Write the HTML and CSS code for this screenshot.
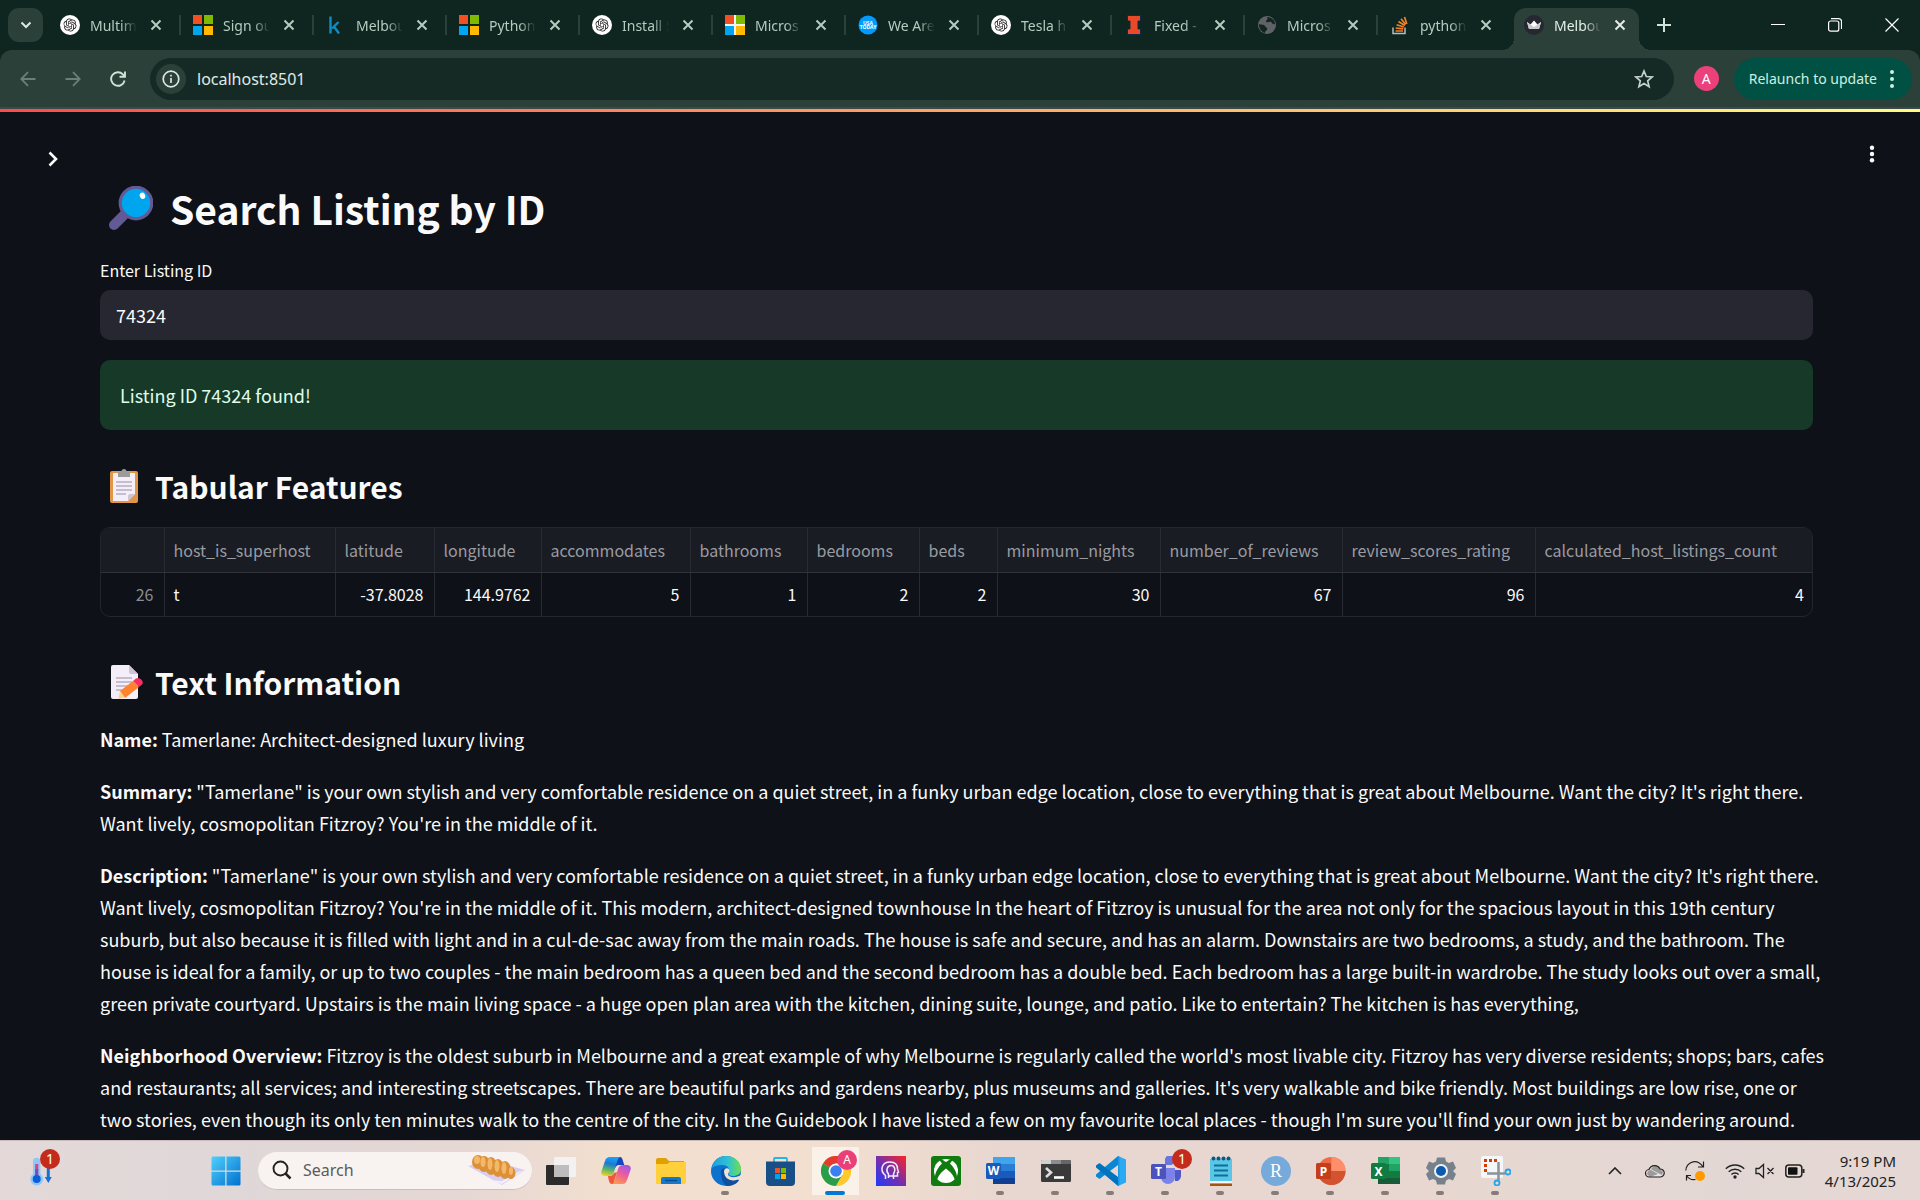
FILE: index.html
```html
<!DOCTYPE html>
<html lang="en">
<head>
<meta charset="utf-8">
<title>Melbourne Listings</title>
<link rel="stylesheet" href="styles.css">
</head>
<body>
<svg class="defs" aria-hidden="true">
  <symbol id="i-x" viewBox="0 0 12 12"><path d="M1.500 1.500l9 9M10.500 1.500l-9 9" stroke="currentColor" stroke-width="2" fill="none"/></symbol>
  <symbol id="i-ai" viewBox="0 0 40 40"><circle cx="20" cy="20" r="20" fill="#fff"/><path transform="translate(6.8 6.8) scale(1.1)" fill="#222" d="M22.2819 9.8211a5.9847 5.9847 0 0 0-.5157-4.9108 6.0462 6.0462 0 0 0-6.5098-2.9A6.0651 6.0651 0 0 0 4.9807 4.1818a5.9847 5.9847 0 0 0-3.9977 2.9 6.0462 6.0462 0 0 0 .7427 7.0966 5.98 5.98 0 0 0 .511 4.9107 6.051 6.051 0 0 0 6.5146 2.9001A5.9847 5.9847 0 0 0 13.2599 24a6.0557 6.0557 0 0 0 5.7718-4.2058 5.9894 5.9894 0 0 0 3.9977-2.9001 6.0557 6.0557 0 0 0-.7475-7.0729zm-9.022 12.6081a4.4755 4.4755 0 0 1-2.8764-1.0408l.1419-.0804 4.7783-2.7582a.7948.7948 0 0 0 .3927-.6813v-6.7369l2.02 1.1686a.071.071 0 0 1 .038.052v5.5826a4.504 4.504 0 0 1-4.4945 4.4944zm-9.6607-4.1254a4.4708 4.4708 0 0 1-.5346-3.0137l.142.0852 4.783 2.7582a.7712.7712 0 0 0 .7806 0l5.8428-3.3685v2.3324a.0804.0804 0 0 1-.0332.0615L9.74 19.9502a4.4992 4.4992 0 0 1-6.1408-1.6464zM2.3408 7.8956a4.485 4.485 0 0 1 2.3655-1.9728V11.6a.7664.7664 0 0 0 .3879.6765l5.8144 3.3543-2.0201 1.1685a.0757.0757 0 0 1-.071 0l-4.8303-2.7865A4.504 4.504 0 0 1 2.3408 7.872zm16.5963 3.8558L13.1038 8.364 15.1192 7.2a.0757.0757 0 0 1 .071 0l4.8303 2.7913a4.4944 4.4944 0 0 1-.6765 8.1042v-5.6772a.79.79 0 0 0-.407-.667zm2.0107-3.0231l-.142-.0852-4.7735-2.7818a.7759.7759 0 0 0-.7854 0L9.409 9.2297V6.8974a.0662.0662 0 0 1 .0284-.0615l4.8303-2.7866a4.4992 4.4992 0 0 1 6.6802 4.66zM8.3065 12.863l-2.02-1.1638a.0804.0804 0 0 1-.038-.0567V6.0742a4.4992 4.4992 0 0 1 7.3757-3.4537l-.142.0805L8.704 5.459a.7948.7948 0 0 0-.3927.6813zm1.0976-2.3654l2.602-1.4998 2.6069 1.4998v2.9994l-2.5974 1.4997-2.6067-1.4997Z"/></symbol>
  <symbol id="i-ms" viewBox="0 0 20 20"><path fill="#f25022" d="M0 0h9v9H0z"/><path fill="#7fba00" d="M11 0h9v9h-9z"/><path fill="#00a4ef" d="M0 11h9v9H0z"/><path fill="#ffb900" d="M11 11h9v9h-9z"/></symbol>
</svg>

<header class="browser">
  <div class="tabstrip">
    <button class="tab-search" aria-label="Search tabs"><svg width="12" height="8" viewBox="0 0 12 8"><path d="M1.500 1.500L6 6l4.500-4.500" fill="none" stroke="#dbe9e2" stroke-width="2"/></svg></button>
    <nav class="tabs">
      <div class="tab"><svg class="fav"><use href="#i-ai"/></svg><a href="#">Multim</a><button aria-label="Close"><svg><use href="#i-x"/></svg></button></div>
      <div class="tab"><svg class="fav"><use href="#i-ms"/></svg><a href="#">Sign ou</a><button aria-label="Close"><svg><use href="#i-x"/></svg></button></div>
      <div class="tab"><svg class="fav" viewBox="0 0 20 20"><path d="M4.500 1.500v17M12.500 7L6 13.500M8 11.500l5 7" fill="none" stroke="#0d8dc4" stroke-width="2.400"/></svg><a href="#">Melbou</a><button aria-label="Close"><svg><use href="#i-x"/></svg></button></div>
      <div class="tab"><svg class="fav"><use href="#i-ms"/></svg><a href="#">Python</a><button aria-label="Close"><svg><use href="#i-x"/></svg></button></div>
      <div class="tab"><svg class="fav"><use href="#i-ai"/></svg><a href="#">Install S</a><button aria-label="Close"><svg><use href="#i-x"/></svg></button></div>
      <div class="tab"><svg class="fav"><rect width="20" height="20" fill="#f3f3f3"/><use href="#i-ms"/></svg><a href="#">Micros</a><button aria-label="Close"><svg><use href="#i-x"/></svg></button></div>
      <div class="tab"><svg class="fav" viewBox="0 0 20 20"><circle cx="10" cy="10" r="9.500" fill="#009bff"/><text x="10" y="9.500" class="usa">USA</text><text x="10" y="14" class="usa">TODAY</text></svg><a href="#">We Are</a><button aria-label="Close"><svg><use href="#i-x"/></svg></button></div>
      <div class="tab"><svg class="fav"><use href="#i-ai"/></svg><a href="#">Tesla h</a><button aria-label="Close"><svg><use href="#i-x"/></svg></button></div>
      <div class="tab"><svg class="fav" viewBox="0 0 20 20"><path d="M3.500.5h13V6H14v8h2.500v5.500h-13V14H6V6H3.500z" fill="#e84a27" stroke="#13294b" stroke-width="1"/></svg><a href="#">Fixed -</a><button aria-label="Close"><svg><use href="#i-x"/></svg></button></div>
      <div class="tab"><svg class="fav" viewBox="0 0 20 20"><circle cx="10" cy="10" r="9" fill="#5f6368"/><path d="M2 9c2 1 5 0 6 2s3 1 2 4c-1 1-2 1-2 3-4-1-6-5-6-9zM10 2c2 2-1 3-1 5 2 1 3-1 5 0s1 3 4 2c0-4-4-7-8-7z" fill="#12261f"/></svg><a href="#">Micros</a><button aria-label="Close"><svg><use href="#i-x"/></svg></button></div>
      <div class="tab"><svg class="fav" viewBox="0 0 20 20"><path d="M3 12.500v6h12v-6" fill="none" stroke="#bcbbbb" stroke-width="1.500"/><path d="M5.500 16h7.500M5.700 13l7.500.8M6.600 9.800l7.200 2.200M8.500 6.500l6.300 4M11 3.800l4.700 5.700M14.500 2l2.300 7" stroke="#f48024" stroke-width="1.700"/></svg><a href="#">python</a><button aria-label="Close"><svg><use href="#i-x"/></svg></button></div>
      <div class="tab active"><svg class="fav" viewBox="0 0 20 20"><circle cx="10" cy="10" r="10" fill="#262730"/><path d="M3 7l3.500 2.500L10 5.500l3.500 4L17 7l-2 7H5z" fill="#fff"/><path d="M3 7l7 5 7-5-2 7H5z" fill="#c9c9cc"/></svg><a href="#">Melbou</a><button aria-label="Close"><svg><use href="#i-x"/></svg></button></div>
    </nav>
    <button class="new-tab" aria-label="New tab"><svg width="14" height="14" viewBox="0 0 14 14"><path d="M7 0v14M0 7h14" stroke="#cfe3d9" stroke-width="2"/></svg></button>
    <div class="window-controls">
      <button aria-label="Minimize"><svg width="14" height="14" viewBox="0 0 14 14"><path d="M0 6.500h14" stroke="#fff"/></svg></button>
      <button aria-label="Restore"><svg width="14" height="14" viewBox="0 0 14 14"><rect x=".6" y="3" width="10.200" height="10.200" rx="2" fill="none" stroke="#fff" stroke-width="1.200"/><path d="M3 .6h7.500a3 3 0 0 1 3 3V11" fill="none" stroke="#fff" stroke-width="1.200"/></svg></button>
      <button aria-label="Close window"><svg width="14" height="14" viewBox="0 0 14 14"><path d="M.5.5l13 13M13.500.5l-13 13" stroke="#fff" stroke-width="1.200"/></svg></button>
    </div>
  </div>
  <div class="toolbar">
    <div class="nav-buttons">
      <button aria-label="Back"><svg width="16" height="16" viewBox="0 0 16 16"><path d="M15.500 8H1.500M8 1.200L1.300 8 8 14.800" fill="none" stroke="#6b7f77" stroke-width="1.800"/></svg></button>
      <button aria-label="Forward"><svg width="16" height="16" viewBox="0 0 16 16"><path d="M.5 8h14M8 1.200L14.700 8 8 14.800" fill="none" stroke="#6b7f77" stroke-width="1.800"/></svg></button>
      <button aria-label="Reload"><svg width="16" height="16" viewBox="0 0 16 16"><path d="M14.600 9.500A6.800 6.800 0 1 1 12.900 3.300L15 5.500M15 .5v5.300H9.500" fill="none" stroke="#cfe3d9" stroke-width="1.900"/></svg></button>
    </div>
    <div class="omnibox">
      <button class="site-info" aria-label="Site information"><svg width="18" height="18" viewBox="0 0 18 18"><circle cx="9" cy="9" r="7.800" fill="none" stroke="#dde8e3" stroke-width="1.700"/><path d="M9 8v5M9 4.800v1.800" stroke="#dde8e3" stroke-width="1.700"/></svg></button>
      <input aria-label="Address" value="localhost:8501">
      <button class="bookmark" aria-label="Bookmark"><svg width="20" height="20" viewBox="0 0 20 20"><path d="M10 2l2.300 5.500 5.900.5-4.500 3.900 1.400 5.800L10 14.600l-5.100 3.100 1.400-5.800L1.800 8l5.900-.5z" fill="none" stroke="#c4d2cb" stroke-width="1.700"/></svg></button>
    </div>
    <button class="avatar">A</button>
    <button class="relaunch">Relaunch to update<svg width="6" height="20" viewBox="0 0 6 20"><g fill="#cfeee0"><circle cx="3" cy="3" r="2"/><circle cx="3" cy="10" r="2"/><circle cx="3" cy="17" r="2"/></g></svg></button>
  </div>
</header>

<main class="app">
  <div class="app-header">
    <button aria-label="Open sidebar"><svg width="10" height="16" viewBox="0 0 10 16"><path d="M1.500 1.500L8 8l-6.500 6.500" fill="none" stroke="#fafafa" stroke-width="2.600"/></svg></button>
    <button class="menu" aria-label="Main menu"><svg width="6" height="18" viewBox="0 0 6 18"><g fill="#fafafa"><circle cx="3" cy="2.700" r="2.200"/><circle cx="3" cy="9" r="2.200"/><circle cx="3" cy="15.300" r="2.200"/></g></svg></button>
  </div>
  <h1><svg width="44" height="44" viewBox="0 0 44 44"><path d="M5 39L15 29" stroke="#635994" stroke-width="10" stroke-linecap="round"/><path d="M14 30l6-6" stroke="#635994" stroke-width="5"/><circle cx="27" cy="17" r="15.800" fill="#00a6ed" stroke="#635994" stroke-width="3.200"/><ellipse cx="33.500" cy="9.800" rx="2.700" ry="3.200" fill="#fff" transform="rotate(-20 33.500 9.800)"/></svg>Search Listing by ID</h1>
  <label for="listing">Enter Listing ID</label>
  <input id="listing" class="field" value="74324">
  <p class="success" role="status">Listing ID 74324 found!</p>

  <h2><svg width="36" height="36" viewBox="0 0 36 36"><rect x="0" y="3" width="28" height="32" rx="2" fill="#e19747"/><path d="M3 5h22v21l-7 7H3z" fill="#f3eef8"/><path d="M25 26l-7 7v-5a2 2 0 0 1 2-2z" fill="#cdc4d6"/><path d="M8 3.500h3.500a2.500 2.500 0 0 1 5 0H20V9H8z" fill="#9b9b9b"/><path d="M6 14h16M6 18h16M6 22h16M6 26h10" stroke="#998ea4" stroke-width="1.200"/></svg>Tabular Features</h2>
  <div class="table-box">
    <table>
      <colgroup><col style="width:63px"><col style="width:171px"><col style="width:99px"><col style="width:107px"><col style="width:149px"><col style="width:117px"><col style="width:112px"><col style="width:78px"><col style="width:163px"><col style="width:182px"><col style="width:193px"><col style="width:279px"></colgroup>
      <thead><tr><th></th><th>host_is_superhost</th><th>latitude</th><th>longitude</th><th>accommodates</th><th>bathrooms</th><th>bedrooms</th><th>beds</th><th>minimum_nights</th><th>number_of_reviews</th><th>review_scores_rating</th><th>calculated_host_listings_count</th></tr></thead>
      <tbody><tr><td class="index">26</td><td class="left">t</td><td>-37.8028</td><td>144.9762</td><td>5</td><td>1</td><td>2</td><td>2</td><td>30</td><td>67</td><td>96</td><td>4</td></tr></tbody>
    </table>
  </div>

  <h2><svg width="36" height="36" viewBox="0 0 36 36"><path d="M1 3a2 2 0 0 1 2-2h16l9 9v23a2 2 0 0 1-2 2H3a2 2 0 0 1-2-2z" fill="#f3eef8"/><path d="M19 1l9 9h-7a2 2 0 0 1-2-2z" fill="#cdc4d6"/><path d="M6 14h16M6 18h16M6 22h12M6 26h6" stroke="#998ea4" stroke-width="1.200"/><path d="M10 27L23 17l6 6-14 11z" fill="#ff822d"/><path d="M9.800 27.500l5 6-6.300 1.300z" fill="#ffce7c"/><path d="M23 17l3-2.500c3-2 8 2 6.500 5.500L29 23z" fill="#f92f60"/></svg>Text Information</h2>
  <section class="prose">
    <p><strong>Name:</strong> Tamerlane: Architect-designed luxury living</p>
    <p><strong>Summary:</strong> "Tamerlane" is your own stylish and very comfortable residence on a quiet street, in a funky urban edge location, close to everything that is great about Melbourne. Want the city? It's right there.<br>Want lively, cosmopolitan Fitzroy? You're in the middle of it.</p>
    <p><strong>Description:</strong> "Tamerlane" is your own stylish and very comfortable residence on a quiet street, in a funky urban edge location, close to everything that is great about Melbourne. Want the city? It's right there.<br>Want lively, cosmopolitan Fitzroy? You're in the middle of it. This modern, architect-designed townhouse In the heart of Fitzroy is unusual for the area not only for the spacious layout in this 19th century<br>suburb, but also because it is filled with light and in a cul-de-sac away from the main roads. The house is safe and secure, and has an alarm. Downstairs are two bedrooms, a study, and the bathroom. The<br>house is ideal for a family, or up to two couples - the main bedroom has a queen bed and the second bedroom has a double bed. Each bedroom has a large built-in wardrobe. The study looks out over a small,<br>green private courtyard. Upstairs is the main living space - a huge open plan area with the kitchen, dining suite, lounge, and patio. Like to entertain? The kitchen is has everything,</p>
    <p><strong>Neighborhood Overview:</strong> Fitzroy is the oldest suburb in Melbourne and a great example of why Melbourne is regularly called the world's most livable city. Fitzroy has very diverse residents; shops; bars, cafes<br>and restaurants; all services; and interesting streetscapes. There are beautiful parks and gardens nearby, plus museums and galleries. It's very walkable and bike friendly. Most buildings are low rise, one or<br>two stories, even though its only ten minutes walk to the centre of the city. In the Guidebook I have listed a few on my favourite local places - though I'm sure you'll find your own just by wandering around.</p>
  </section>
</main>

<footer class="taskbar">
  <div class="widgets"><button class="app-icon" aria-label="Weather"><svg width="30" height="30" viewBox="0 0 30 30"><path d="M3 5.500a3.700 3.700 0 0 1 7.400 0V18a6.400 6.400 0 1 1-7.400 0z" fill="#8fc7fb"/><path d="M6.700 8v14" stroke="#d8427d" stroke-width="3"/><path d="M6.700 13v9" stroke="#6a50c0" stroke-width="3"/><circle cx="6.700" cy="23" r="4" fill="#0a5fd8"/><path d="M16.800 12v9h-2l3.500 6 3.500-6h-2v-9z" fill="#1470dc"/></svg><span class="badge">1</span></button></div>
  <button class="app-icon" aria-label="Start"><svg width="30" height="30" viewBox="0 0 30 30"><defs><linearGradient id="win" x2="1" y2="1"><stop stop-color="#4fd0fc"/><stop offset="1" stop-color="#0071d0"/></linearGradient></defs><path d="M2 .5h12.200v14H.5V2A1.500 1.500 0 0 1 2 .5zM15.500.5H28A1.500 1.500 0 0 1 29.500 2v12.500h-14zM.5 15.800h13.700v13.700H2A1.500 1.500 0 0 1 .5 28zM15.500 15.800h14V28a1.500 1.500 0 0 1-1.500 1.500H15.500z" fill="url(#win)"/></svg></button>
  <div class="search">
    <svg width="20" height="20" viewBox="0 0 20 20"><circle cx="8.500" cy="8.500" r="7" fill="none" stroke="#222" stroke-width="1.900"/><path d="M13.500 13.500l5 5" stroke="#222" stroke-width="2.500"/></svg>
    <input aria-label="Search" placeholder="Search">
    <svg width="58" height="32" viewBox="0 0 58 32"><path d="M0 12l22-6 35 10-23 15z" fill="#d9cdf0"/><path d="M20 26l14 1 16-9 6-2-22 14z" fill="#f2edfb"/><g fill="#dc9038"><ellipse cx="10" cy="8" rx="6" ry="7"/><ellipse cx="16" cy="10" rx="6" ry="8"/><ellipse cx="23" cy="12" rx="6" ry="9"/><ellipse cx="30" cy="14" rx="6" ry="9"/><ellipse cx="37" cy="16" rx="6" ry="9"/><ellipse cx="43" cy="19" rx="4.500" ry="6"/></g><g fill="#f3b868"><ellipse cx="9" cy="6" rx="3" ry="4"/><ellipse cx="15" cy="8" rx="2.500" ry="5"/><ellipse cx="22" cy="10" rx="2.500" ry="6"/><ellipse cx="29" cy="12" rx="2.500" ry="6"/><ellipse cx="36" cy="14" rx="2.500" ry="6"/><ellipse cx="43" cy="17" rx="2" ry="4"/></g></svg>
  </div>
  <nav class="apps">
    <button class="app-icon" aria-label="Task view"><svg width="30" height="30" viewBox="0 0 30 30"><rect y="9" width="23" height="20" rx="1" fill="#2b2b2b"/><rect x="8" y="1" width="22" height="20" rx="1" fill="#f4f4f4" opacity=".9"/><path d="M8 9h15v12H8z" fill="#bdbdbd"/></svg></button>
    <button class="app-icon" aria-label="Copilot"><svg width="30" height="30" viewBox="0 0 30 30"><defs><linearGradient id="cpa" x1=".5" x2=".3" y2="1"><stop stop-color="#16a5f0"/><stop offset=".35" stop-color="#1c78d8"/><stop offset=".65" stop-color="#55b36c"/><stop offset="1" stop-color="#f3d02b"/></linearGradient><linearGradient id="cpb" x1=".8" x2=".3" y2="1"><stop stop-color="#a057e8"/><stop offset=".5" stop-color="#ec5d9c"/><stop offset="1" stop-color="#fb9a4a"/></linearGradient></defs><path d="M14 1h5c2 0 2.500 2 3.300 5l1 3h-5c-3 0-4 2-5 5z" fill="#1746c4"/><path d="M9 1h10c-2 1-2.500 3-3.200 5.500L13 16c-1 3-2.500 4-5 4H4c-3 0-4.500-2-3.500-5L4 5c1-3 2.500-4 5-4z" fill="url(#cpa)"/><path d="M21 28H11c2-1 2.500-3 3.200-5.500L17 13c1-3 2.500-4 5-4h4c3 0 4.500 2 3.500 5L26 24c-1 3-2.500 4-5 4z" fill="url(#cpb)"/><path d="M11 28c-2 0-3-2-3.500-5L7 20h2c2 0 3-1 4-3l3-1-2.500 8c-.5 2-1 4-2.500 4z" fill="#f0583d"/></svg></button>
    <button class="app-icon" aria-label="File Explorer"><svg width="30" height="30" viewBox="0 0 30 30"><path d="M0 4a2 2 0 0 1 2-2h8l3 3h15v6H0z" fill="#e0a100"/><path d="M0 8h11l3-2h16v20a2 2 0 0 1-2 2H0z" fill="#ffcf3c"/><path d="M5 28v-5a2 2 0 0 1 2-2h16a2 2 0 0 1 2 2v5z" fill="#1479cc"/><path d="M9 24.500h12" stroke="#0a4d8f" stroke-width="1.500"/></svg></button>
    <button class="app-icon running" aria-label="Edge"><svg width="30" height="30" viewBox="0 0 30 30"><defs><linearGradient id="edg" x2="1"><stop stop-color="#1f9de0"/><stop offset=".55" stop-color="#2fc2d4"/><stop offset="1" stop-color="#6be04c"/></linearGradient></defs><circle cx="15" cy="15" r="15" fill="#0c72ce"/><path d="M1 12C2 4 8 0 15 0c9 0 15 6 15 13 0 5-4 7-8 7-3 0-5-1-4-3 2-5-2-8-7-8-4 0-8 1-10 3z" fill="url(#edg)"/><path d="M10 15c-1 6 3 14 10 14 3-1 6-3 7.500-5-6 3-15 2-15-6 0-3 2-5 3-5-3-1-5 0-5.500 2z" fill="#104f9e"/><path d="M13 15c1-4 6-3 5.500 0 0 1-1.500 2-1.500 3.500 0 2 5 4 11 1.500l2-1v4l-2 1c-6 3-15 0-15-9z" fill="#f1dfcf"/><path d="M13 15c-1 6 5 10 10 9.500 2 0 4-1 5-.5-2 4-7 6-12 6-5-3-7-9-3-15z" fill="#104f9e"/></svg></button>
    <button class="app-icon" aria-label="Microsoft Store"><svg width="30" height="30" viewBox="0 0 30 30"><path d="M8 6V3a1 1 0 0 1 1-1h11a1 1 0 0 1 1 1v3" fill="none" stroke="#22b4f0" stroke-width="1.800"/><path d="M0 5.500h29V26a4 4 0 0 1-4 4H4a4 4 0 0 1-4-4z" fill="#174f86"/><path fill="#f25022" d="M9 12h5v5H9z"/><path fill="#7fba00" d="M15 12h5v5h-5z"/><path fill="#00a4ef" d="M9 18h5v5H9z"/><path fill="#ffb900" d="M15 18h5v5h-5z"/></svg></button>
    <button class="app-icon current" aria-label="Chrome"><svg width="30" height="30" viewBox="0 0 30 30"><circle cx="15" cy="15" r="15" fill="#fdd02f"/><path d="M15 15L2 7.500A15 15 0 0 1 28 7.500H15z" fill="#e33b2e"/><path d="M2 7.500A15 15 0 0 0 15 30l6.500-11.300L15 15z" fill="#2a9d4a"/><path d="M15 7.500h13A15 15 0 0 1 15 30l6.500-11.300z" fill="#fdc92f"/><circle cx="15" cy="15" r="7.500" fill="#fff"/><circle cx="15" cy="15" r="5.800" fill="#3c7ff0"/></svg><span class="badge profile">A</span></button>
    <button class="app-icon" aria-label="Assistant"><svg width="30" height="30" viewBox="0 0 30 30"><defs><linearGradient id="asst" y1="1" x2="1" y2="0"><stop stop-color="#1a3cff"/><stop offset=".5" stop-color="#7a2fa8"/><stop offset="1" stop-color="#ff2323"/></linearGradient></defs><path d="M0 0h30v30H0z" fill="url(#asst)"/><path d="M9.500 23v-3.500C3 14 6 6 14 6c6 0 7.500 4 7.500 7l1 3-1 .5V20h-4v3" fill="none" stroke="#f0ecff" stroke-width="1.500"/><path d="M12.500 22v-4c-3-3-1.500-8.500 2.500-8.500s5 5 2.500 8.500v2h-5" fill="none" stroke="#f0ecff" stroke-width="1.500"/></svg></button>
    <button class="app-icon" aria-label="Xbox"><svg width="30" height="30" viewBox="0 0 30 30"><rect width="30" height="30" rx="3" fill="#107c10"/><circle cx="15" cy="15" r="12" fill="#fff"/><path d="M8 3.500c3-.5 5 1 7 2.500 2-1.500 4-3 7-2.500l-3 4c3 3 7 8 7 14l-2 3c-1-5-5-9-9-12-4 3-8 7-9 12l-2-3c0-6 4-11 7-14z" fill="#107c10"/></svg></button>
    <button class="app-icon running" aria-label="Word"><svg width="30" height="30" viewBox="0 0 30 30"><path d="M7 1h22v7H7z" fill="#41a5ee"/><path d="M7 8h22v7H7z" fill="#2b7cd3"/><path d="M7 15h22v7H7z" fill="#185abd"/><path d="M7 22h22v6H7z" fill="#103f91"/><rect y="7" width="15" height="16" rx="1.500" fill="#185abd"/><text x="7.500" y="19" class="letter">W</text></svg></button>
    <button class="app-icon running" aria-label="Terminal"><svg width="30" height="30" viewBox="0 0 30 30"><rect y="4" width="30" height="22" rx="1.500" fill="#3a3a3a"/><path d="M1 4h9v4H0V5z" fill="#cfcfcf"/><path d="M10 4h10v4H10z" fill="#8c8c8c"/><path d="M20 4h9l1 1v3H20z" fill="#666"/><path d="M5 12l5 4.500L5 21" fill="none" stroke="#ddd" stroke-width="2.600"/><path d="M13 21.500h10" stroke="#fff" stroke-width="2.600"/></svg></button>
    <button class="app-icon running" aria-label="Visual Studio Code"><svg width="30" height="30" viewBox="0 0 30 30"><path d="M22 0l8 3.500v23L22 30z" fill="#2aaaf2"/><path d="M22 0v9L3.500 23 0 20.500v-2z" fill="#0a86d4"/><path d="M22 30v-9L3.500 7 0 9.500v2z" fill="#0072c0"/><path d="M22 8.500V0l1.500.7v28.600L22 30v-8.500z" fill="#1b98e6"/></svg></button>
    <button class="app-icon running" aria-label="Teams"><svg width="30" height="30" viewBox="0 0 30 30"><path d="M14 5a5 5 0 1 1 6 4h-6z" fill="#6c74dd"/><path d="M10 12h14v9a7 7 0 0 1-14 0z" fill="#7b83eb"/><path d="M24 14h6v6a5 5 0 0 1-6 5z" fill="#5059c9"/><rect y="8" width="15" height="15" rx="1.500" fill="#4b53bc"/><text x="7.500" y="19.500" class="letter">T</text></svg><span class="badge">1</span></button>
    <button class="app-icon running" aria-label="Notepad"><svg width="30" height="30" viewBox="0 0 30 30"><path d="M4 3h22v23H4z" fill="#58c6e4"/><path d="M4 25h22v2H4z" fill="#f5f5f5"/><path d="M4 27.500h22V30H4z" fill="#a5540d"/><g fill="#0a5b80"><circle cx="7.500" cy="2.500" r="2"/><circle cx="12.500" cy="2.500" r="2"/><circle cx="17.500" cy="2.500" r="2"/><circle cx="22.500" cy="2.500" r="2"/></g><path d="M8 9.500h14M8 14.500h14M8 19.500h14" stroke="#0e6f99" stroke-width="1.800"/></svg></button>
    <button class="app-icon running" aria-label="RStudio"><svg width="30" height="30" viewBox="0 0 30 30"><circle cx="15" cy="15" r="15" fill="#75aadb"/><text x="15" y="20.500" class="letter serif">R</text></svg></button>
    <button class="app-icon running" aria-label="PowerPoint"><svg width="30" height="30" viewBox="0 0 30 30"><circle cx="15.500" cy="15" r="14" fill="#ed6c47"/><path d="M15.500 1a14 14 0 0 1 14 14h-14z" fill="#ff8f6b"/><path d="M1.500 15h28a14 14 0 0 1-28 0z" fill="#d35230"/><rect y="7" width="15" height="16" rx="1.500" fill="#c43e1c"/><text x="7.500" y="19.500" class="letter">P</text></svg></button>
    <button class="app-icon running" aria-label="Excel"><svg width="30" height="30" viewBox="0 0 30 30"><path d="M7 1h11v7H7z" fill="#21a366"/><path d="M18 1h11v7H18z" fill="#33c481"/><path d="M7 8h11v14H7z" fill="#107c41"/><path d="M18 8h11v7H18z" fill="#21a366"/><path d="M18 15h11v7H18z" fill="#107c41"/><path d="M7 22h22v6H7z" fill="#185c37"/><rect y="7" width="15" height="16" rx="1.500" fill="#107c41"/><text x="7.500" y="19.500" class="letter">X</text></svg></button>
    <button class="app-icon running" aria-label="Settings"><svg width="30" height="30" viewBox="0 0 30 30"><path d="M11 1.500h8l1 4 3 1.500 4-1.500L30 12l-3 3 3 3-3 6.500-4-1.500-3 1.500-1 4h-8l-1-4L7 23l-4 1.500L0 18l3-3-3-3 3-6.500L7 7l3-1.500z" fill="#76818b"/><circle cx="15" cy="15" r="7" fill="#f2f2f2"/><circle cx="15" cy="15" r="5" fill="#0c5ab0"/></svg></button>
    <button class="app-icon running" aria-label="Snipping Tool"><svg width="30" height="30" viewBox="0 0 30 30"><rect width="22" height="22" rx="2" fill="#f5f6f8"/><path d="M4.500 16V4.500H17" fill="none" stroke="#d83b01" stroke-width="3" stroke-dasharray="3 2"/><path d="M17.500 6v18M6 17.500h18" stroke="#8a929b" stroke-width="2.500"/><circle cx="27" cy="16" r="2.500" fill="none" stroke="#27a5ea" stroke-width="1.800"/><circle cx="16" cy="27" r="2.500" fill="none" stroke="#27a5ea" stroke-width="1.800"/></svg></button>
  </nav>
  <div class="tray">
    <button aria-label="Hidden icons"><svg width="14" height="8" viewBox="0 0 14 8"><path d="M1 7l6-6 6 6" fill="none" stroke="#222" stroke-width="1.600"/></svg></button>
    <button aria-label="OneDrive"><svg width="20" height="14" viewBox="0 0 20 14"><path d="M2 12l8-5 8 5-2.500.6h-11z" fill="#e6e6e6"/><path d="M2 10Q3 6 6 6l7 4-8 3zM6 5q5-7 9 0l3 3-1 3-6-3z" fill="#9b9b9b"/><path d="M4.500 13A3.700 3.700 0 0 1 4 5.500 6 6 0 0 1 15 5a4 4 0 0 1 .5 8z" fill="none" stroke="#222" stroke-width="1.200"/></svg></button>
    <button aria-label="Windows Update"><svg width="20" height="20" viewBox="0 0 20 20"><path d="M.8 9.500A9 9 0 0 1 18 6M18.500.5V6H13M1.500 14.500v5M1 14.500h5M1.500 14.500a9 9 0 0 0 9 4" fill="none" stroke="#222" stroke-width="1.200"/><circle cx="15" cy="15" r="5" fill="#ff9a00"/></svg></button>
    <button aria-label="Network"><svg width="20" height="16" viewBox="0 0 20 16"><path d="M.8 5.800a13 13 0 0 1 18.400 0M3.700 8.800a9 9 0 0 1 12.600 0M6.400 11.500a5 5 0 0 1 7.200 0" fill="none" stroke="#222" stroke-width="1.400"/><circle cx="10" cy="14" r="1.700" fill="#222"/></svg></button>
    <button aria-label="Volume muted"><svg width="20" height="16" viewBox="0 0 20 16"><path d="M1 5.500h3l4.500-4v13l-4.500-4H1zM12.500 5l6 6M18.500 5l-6 6" fill="none" stroke="#222" stroke-width="1.300"/></svg></button>
    <button aria-label="Battery"><svg width="20" height="14" viewBox="0 0 20 14"><rect x=".8" y="1" width="16" height="12" rx="3" fill="none" stroke="#222" stroke-width="1.500"/><rect x="3" y="3.200" width="9.500" height="7.600" rx="1" fill="#111"/><path d="M18.500 5v4" stroke="#222" stroke-width="2"/></svg></button>
    <button class="clock"><span>9:19 PM</span><span>4/13/2025</span></button>
  </div>
</footer>
</body>
</html>
```
FILE: styles.css
```css
* { box-sizing: border-box; }
body {
  margin: 0;
  height: 100vh;
  display: flex;
  flex-direction: column;
  overflow: hidden;
  background: #0e1117;
  color: #fafafa;
  font-family: "Noto Sans CJK SC", "Noto Sans", sans-serif;
  font-size: 18px;
}
button {
  border: 0;
  padding: 0;
  background: none;
  color: inherit;
  font: inherit;
  display: flex;
  align-items: center;
  justify-content: center;
}
input { border: 0; outline: 0; background: none; color: inherit; font: inherit; padding: 0; min-width: 0; }
a { color: inherit; text-decoration: none; }
svg { display: block; flex: none; }
.defs { position: absolute; width: 0; height: 0; }

/* Browser window */
.browser {
  flex: none;
  background: #0f251f;
  font-family: "Noto Sans", sans-serif;
  font-size: 14px;
}
.tabstrip { display: flex; height: 50px; align-items: center; }
.tab-search { width: 35px; height: 34px; margin: 0 5px 0 8px; border-radius: 11px; background: #2b4038; flex: none; }
.tabs { display: flex; height: 100%; align-items: center; }
.tab {
  flex: 0 1 133px;
  width: 133px;
  min-width: 0;
  height: 20px;
  display: flex;
  align-items: center;
  gap: 10px;
  padding: 0 17px 0 12px;
  border-right: 2px solid #2b4038;
  color: #b5cbc0;
}
.tab:nth-last-child(2) { border-color: transparent; }
.fav { width: 20px; height: 20px; }
.tab a {
  flex: 1;
  overflow: hidden;
  white-space: nowrap;
  -webkit-mask-image: linear-gradient(90deg, #000 65%, transparent);
  mask-image: linear-gradient(90deg, #000 65%, transparent);
}
.tab button { margin-left: 3px; }
.tab button svg { width: 12px; height: 12px; }
.tab.active {
  position: relative;
  align-self: flex-end;
  flex: none;
  width: 125px;
  height: 42px;
  margin: 0 3px;
  padding: 0 13px 8px 10px;
  border: 0;
  border-radius: 12px 12px 0 0;
  background: #2b4038;
  color: #e3eee8;
}
.tab.active::before, .tab.active::after {
  content: "";
  position: absolute;
  bottom: 0;
  width: 12px;
  height: 12px;
}
.tab.active::before { left: -12px; background: radial-gradient(circle at 0 0, transparent 12px, #2b4038 12px); }
.tab.active::after { right: -12px; background: radial-gradient(circle at 100% 0, transparent 12px, #2b4038 12px); }
.new-tab { width: 44px; height: 44px; }
.window-controls { display: flex; margin-left: auto; }
.window-controls button { width: 57px; height: 48px; }
.toolbar {
  display: flex;
  align-items: center;
  height: 59px;
  padding: 0 8px 0 5px;
  background: #2b4038;
  border-bottom: 2px solid #3d4a4a;
  border-radius: 12px 12px 0 0;
}
.nav-buttons { display: flex; width: 145px; flex: none; }
.nav-buttons button { width: 45px; height: 42px; }
.omnibox {
  flex: 1;
  display: flex;
  align-items: center;
  gap: 11px;
  height: 42px;
  padding: 0 20px 0 6px;
  border-radius: 21px;
  background: #152a25;
  color: #e0ebe5;
  font-size: 16px;
}
.omnibox input { flex: 1; }
.site-info { width: 30px; height: 30px; border-radius: 50%; background: #2b4038; }
.avatar { width: 25px; height: 25px; margin: 0 15px 0 20px; border-radius: 50%; background: #ec407a; color: #fff; }
.relaunch { gap: 12px; height: 42px; padding: 0 17px 0 15px; border-radius: 21px; background: #005143; color: #cfeee0; white-space: nowrap; }

/* Application page */
.app {
  flex: 1;
  min-height: 0;
  overflow: hidden;
  display: flex;
  flex-direction: column;
  padding: 0 107px 0 100px;
  border-top: 3px solid;
  border-image: linear-gradient(90deg, #ff4b4b, #fffd80) 1;
}
.app > * { flex: none; }
.app-header { display: flex; justify-content: space-between; align-items: center; height: 64px; margin: 12px -72px 0 -60px; padding: 6px 10px 0 8px; }
.menu { padding-bottom: 10px; }
h1, h2 { display: flex; align-items: center; margin: 0; font-weight: 700; }
h1 { gap: 17px; height: 60px; margin-top: -10px; padding-left: 9px; font-size: 39px; line-height: 60px; }
label { margin-top: 20px; font-size: 16px; line-height: 24px; margin-bottom: 8px; }
.field { height: 50px; padding: 0 16px; border-radius: 10px; background: #262730; }
.success { margin: 20px 0 32px; padding: 19px 20px; line-height: 32px; border-radius: 10px; background: #173928; color: #dffde9; }
h2 { gap: 9px; height: 48px; padding-left: 10px; font-size: 30px; line-height: 48px; }
.table-box { margin: 17px 0 41px; border: 1px solid #23262c; border-radius: 10px; overflow: hidden; }
table { width: 100%; table-layout: fixed; border-collapse: collapse; font-size: 16px; line-height: 24px; }
th, td { height: 44px; padding: 0 10px 0 9px; border-right: 1px solid #292b32; text-align: right; white-space: nowrap; }
th { background: #1a1c24; border-bottom: 1px solid #31333a; color: #999ba0; font-weight: 400; text-align: left; }
th:last-child, td:last-child { border-right: 0; }
td.left { text-align: left; }
td.index { color: #8b8d92; }
.prose { margin-top: 17px; line-height: 32px; white-space: nowrap; }
.prose p { margin: 0 0 20px; }

/* Taskbar */
.taskbar {
  flex: none;
  display: flex;
  align-items: center;
  height: 60px;
  padding-right: 24px;
  border-top: 1px solid #c9bcba;
  background: linear-gradient(90deg, #e4d9d8, #dfd7d8 12%, #e5d7d4 24%, #f2dfcf 32%, #f2dfcf 43%, #e8d7d0 52%, #e7d7d0 75%, #e3d7d5 90%, #e5d8d4);
  color: #222;
  font-family: "Noto Sans", sans-serif;
}
.widgets { width: 198px; padding-left: 17px; flex: none; }
.app-icon { position: relative; width: 55px; height: 48px; flex: none; }
.badge {
  position: absolute;
  top: 2px;
  right: 1px;
  width: 20px;
  height: 20px;
  border-radius: 50%;
  background: #c42b1c;
  color: #fff;
  font-size: 14px;
  line-height: 20px;
  text-align: center;
}
.widgets .badge { right: 12px; }
.profile { top: 3px; right: 6px; background: #e9407a; font-size: 12px; }
.app-icon.running::after, .app-icon.current::after {
  content: "";
  position: absolute;
  bottom: 0;
  left: 23px;
  width: 8px;
  height: 4px;
  border-radius: 2px;
  background: #857b77;
}
.app-icon.current::after { left: 17px; width: 20px; background: #0078d4; }
.app-icon.current { background: linear-gradient(#faf1e9, #faf1e9) content-box; padding: 0 4px; }
.search {
  display: flex;
  align-items: center;
  gap: 11px;
  width: 274px;
  height: 38px;
  margin: 0 1px 0 5px;
  padding: 0 6px 0 14px;
  border-radius: 19px;
  background: #f8f3f1;
  border-bottom: 1px solid #c9bebb;
  font-size: 16px;
}
.search input { flex: 1; }
.search input::placeholder { color: #5c5a5a; opacity: 1; }
.apps { display: flex; }
.tray { display: flex; align-items: center; margin-left: auto; }
.tray button { width: 30px; height: 40px; }
.tray button:nth-child(-n+3) { width: 40px; }
.tray button:nth-child(3) { margin-right: 5px; }
.tray .clock { width: auto; margin-left: 15px; flex-direction: column; align-items: flex-end; font-size: 15px; line-height: 20px; }
.usa { font: 700 5px "Noto Sans", sans-serif; fill: #fff; text-anchor: middle; }
.letter { font: 700 12px "Noto Sans", sans-serif; fill: #fff; text-anchor: middle; }
.serif { font: 400 18px "Liberation Serif", serif; }
```
